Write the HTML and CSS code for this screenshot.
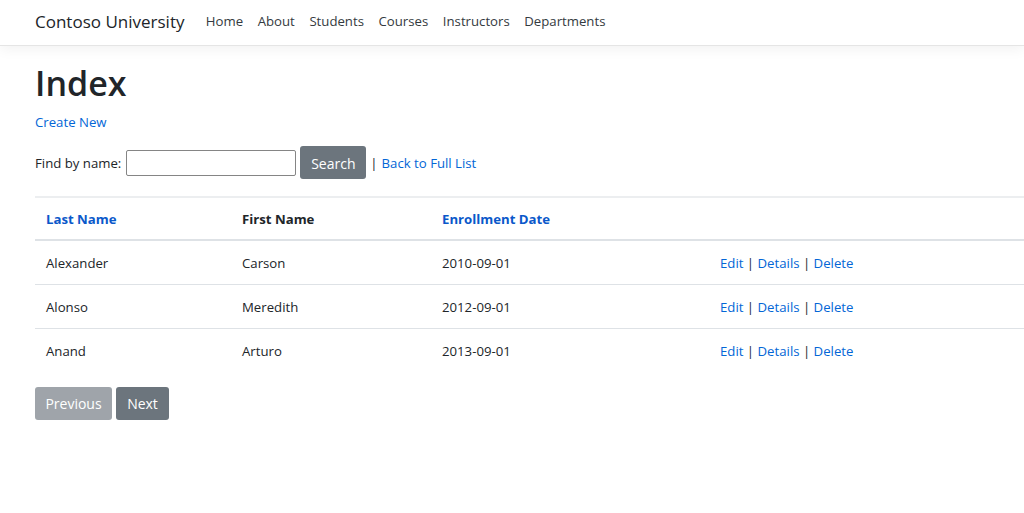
FILE: index.html
```
<!DOCTYPE html>
<html lang="en">
<head>
  <meta charset="UTF-8" />
  <title>Index - Contoso University</title>
  <link rel="stylesheet" href="styles.css">
</head>
<body>
  <header class="navbar">
    <a class="brand" href="#">Contoso University</a>
    <nav class="nav">
      <a href="#">Home</a>
      <a href="#">About</a>
      <a href="#">Students</a>
      <a href="#">Courses</a>
      <a href="#">Instructors</a>
      <a href="#">Departments</a>
    </nav>
  </header>

  <main class="container">
    <h1>Index</h1>
    <p class="create"><a href="#">Create New</a></p>

    <form class="search">
      <label>Find by name:</label>
      <input type="text" />
      <button type="button" class="btn">Search</button>
      <span class="sep">|</span> <a href="#">Back to Full List</a>
    </form>

    <table class="table">
      <thead>
        <tr>
          <th class="c1"><a href="#">Last Name</a></th>
          <th class="c2">First Name</th>
          <th class="c3"><a href="#">Enrollment Date</a></th>
          <th></th>
        </tr>
      </thead>
      <tbody>
        <tr>
          <td>Alexander</td>
          <td>Carson</td>
          <td>2010-09-01</td>
          <td><a href="#">Edit</a> | <a href="#">Details</a> | <a href="#">Delete</a></td>
        </tr>
        <tr>
          <td>Alonso</td>
          <td>Meredith</td>
          <td>2012-09-01</td>
          <td><a href="#">Edit</a> | <a href="#">Details</a> | <a href="#">Delete</a></td>
        </tr>
        <tr>
          <td>Anand</td>
          <td>Arturo</td>
          <td>2013-09-01</td>
          <td><a href="#">Edit</a> | <a href="#">Details</a> | <a href="#">Delete</a></td>
        </tr>
      </tbody>
    </table>

    <div class="pager">
      <a class="btn disabled" href="#">Previous</a>
      <a class="btn" href="#">Next</a>
    </div>
  </main>
</body>
</html>
```

FILE: styles.css
```
html, body {
  margin: 0;
  padding: 0;
  background: #fff;
  color: #212529;
  font-family: 'Open Sans', 'Noto Sans', sans-serif;
  font-size: 13.2px;
  overflow: hidden;
}

a {
  color: #0366d6;
  text-decoration: none;
}

.navbar {
  display: flex;
  align-items: center;
  height: 42px;
  padding: 0 35px 3px;
  background: #fff;
  border-bottom: 1px solid #e5e5e5;
  box-shadow: 0 4px 12px rgba(0, 0, 0, 0.05);
}

.brand {
  color: #212529;
  font-size: 17px;
  margin-right: 14px;
}

.nav {
  display: flex;
}

.nav a {
  color: #343a40;
  padding: 0 7.3px;
}

.container {
  padding: 15px 0 0 35px;
}

h1 {
  margin: 0;
  font-size: 34px;
  font-weight: 600;
  line-height: 44px;
}

.create {
  margin: 7px 0 0;
  line-height: 20px;
}

.search {
  display: flex;
  align-items: center;
  margin-top: 14px;
  height: 33px;
}

.search label {
  margin-right: 5px;
}

.search input {
  width: 166px;
  height: 22px;
  padding: 1px;
  border: 1px solid #858585;
  border-radius: 2px;
  margin: 0 4px 0 0;
  font: inherit;
}

.btn {
  display: inline-block;
  background: #6c757d;
  color: #fff;
  border: 0;
  border-radius: 3px;
  font: inherit;
  font-size: 14px;
  height: 33px;
  line-height: 33px;
  padding: 0 11px;
  box-sizing: border-box;
}

.search .btn {
  line-height: 35px;
  width: 66px;
  padding: 0;
  margin-right: 4px;
}

.sep {
  margin-right: 4px;
}

.table {
  width: 1100px;
  margin-top: 17px;
  border-collapse: collapse;
  border-top: 2px solid #eceef0;
}

.table th, .table td {
  text-align: left;
  padding: 0 11px;
  height: 43px;
  border-bottom: 1px solid #dee2e6;
}

.table tbody tr:last-child td {
  border-bottom: 0;
}

.table th {
  height: 41px;
  font-weight: 700;
  border-bottom: 2px solid #dee2e6;
}

.table th a {
  color: #0a58ca;
}

.table th.c1 { width: 174px; }
.table th.c2 { width: 178px; }
.table th.c3 { width: 256px; }

.pager {
  display: flex;
  gap: 4px;
  margin-top: 15px;
}

.pager .btn.disabled {
  width: 77px;
  padding: 0;
  text-align: center;
  opacity: 0.65;
}

.pager .btn {
  width: 53px;
  padding: 0;
  text-align: center;
}
```
